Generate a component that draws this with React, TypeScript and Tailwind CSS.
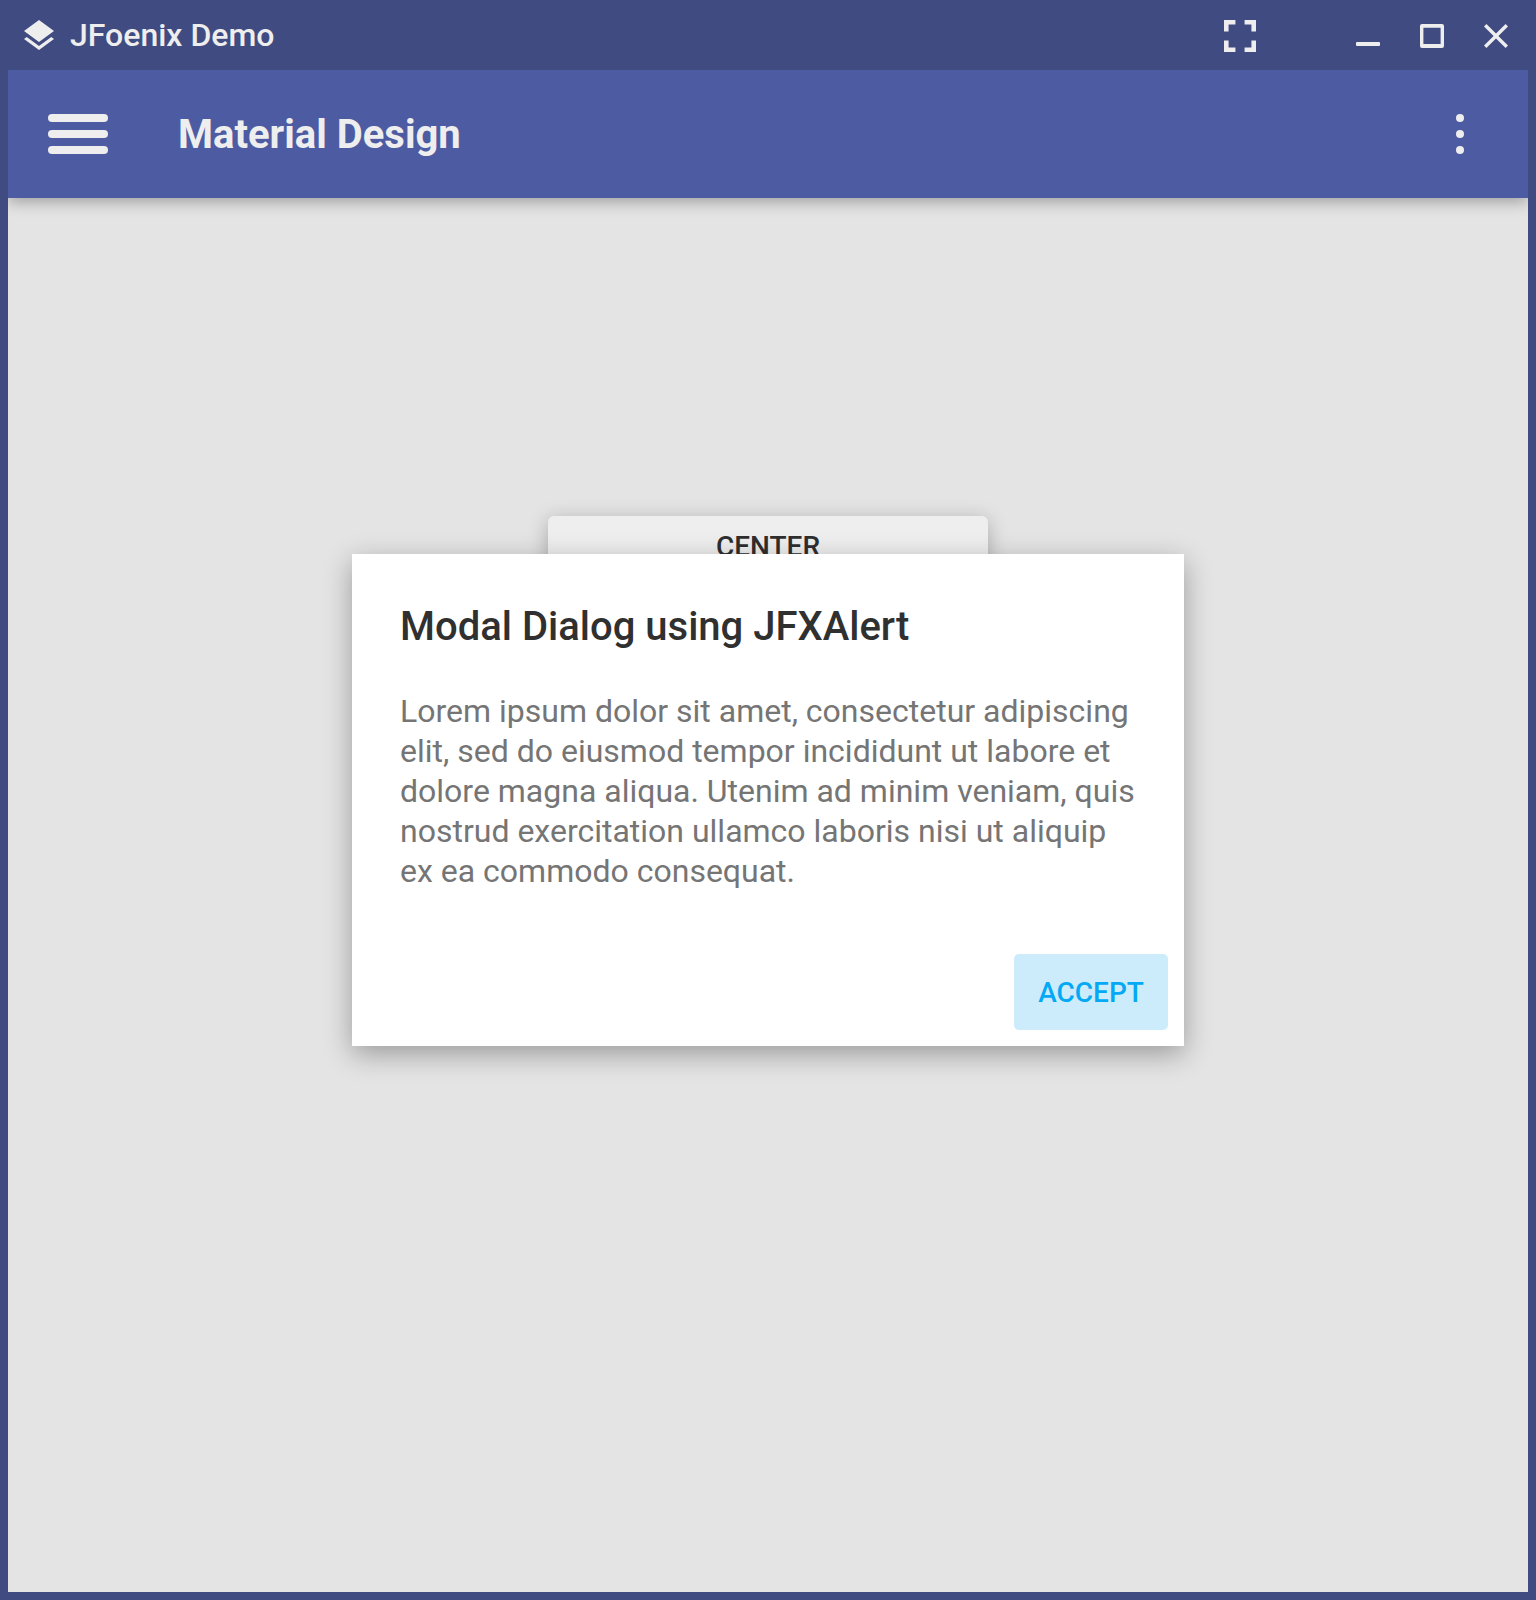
import React from "react";

function TitleBar() {
  return (
    <header className="flex h-[70px] shrink-0 items-center pl-6 pr-7 text-[#eeeeee]">
      <svg className="h-[30px] w-[30px]" viewBox="3 2 18 19.07" preserveAspectRatio="none" fill="currentColor">
        <path d="M11.99 18.54l-7.37-5.73L3 14.07l9 7 9-7-1.63-1.27-7.38 5.74zM12 16l7.36-5.73L21 9l-9-7-9 7 1.63 1.27L12 16z" />
      </svg>
      <span className="ml-4 text-[32px] leading-[38px] font-medium">JFoenix Demo</span>
      <div className="ml-auto flex items-center pt-0.5">
        <svg className="h-8 w-8" viewBox="5 5 14 14" fill="currentColor">
          <path d="M7 14H5v5h5v-2H7v-3zm-2-4h2V7h3V5H5v5zm12 7h-3v2h5v-5h-2v3zM14 5v2h3v3h2V5h-5z" />
        </svg>
        <span className="mt-4 ml-[100px] h-1 w-6 rounded-[1px] bg-[#eeeeee]" />
        <svg className="ml-10 h-6 w-6" viewBox="0 0 24 24" fill="currentColor" fillRule="evenodd">
          <path d="M2 0h20a2 2 0 0 1 2 2v20a2 2 0 0 1-2 2H2a2 2 0 0 1-2-2V2a2 2 0 0 1 2-2zM3.4 3.8v16.2h17.2V3.8z" />
        </svg>
        <svg className="ml-10 h-6 w-6" viewBox="5 5 14 14" fill="currentColor">
          <path d="M19 6.41L17.59 5 12 10.59 6.41 5 5 6.41 10.59 12 5 17.59 6.41 19 12 13.41 17.59 19 19 17.59 13.41 12z" />
        </svg>
      </div>
    </header>
  );
}

function Toolbar() {
  return (
    <div className="relative z-10 flex h-32 shrink-0 items-center bg-[#4d5ca2] pl-10 pr-16 text-[#eeeeee] shadow-[0_4px_14px_rgba(0,0,0,0.3)]">
      <button className="flex w-[60px] flex-col gap-2" aria-label="Menu">
        <span className="h-2 w-full rounded-full bg-[#eeeeee]" />
        <span className="h-2 w-full rounded-full bg-[#eeeeee]" />
        <span className="h-2 w-full rounded-full bg-[#eeeeee]" />
      </button>
      <h1 className="ml-[70px] pt-0.5 text-[40px] leading-[48px] font-bold">Material Design</h1>
      <button className="ml-auto flex flex-col gap-2" aria-label="Options">
        <span className="h-2 w-2 rounded-full bg-[#eeeeee]" />
        <span className="h-2 w-2 rounded-full bg-[#eeeeee]" />
        <span className="h-2 w-2 rounded-full bg-[#eeeeee]" />
      </button>
    </div>
  );
}

function AlertDialog() {
  return (
    <div
      role="dialog"
      className="absolute top-[356px] left-[344px] z-20 flex h-[492px] w-[832px] flex-col bg-white px-12 pt-[49px] shadow-[0_8px_26px_rgba(0,0,0,0.32)]"
    >
      <h2 className="text-[40px] leading-[48px] font-medium text-[#303030]">Modal Dialog using JFXAlert</h2>
      <p className="mt-10 text-[32px] leading-10 whitespace-nowrap text-[#757575]">
        Lorem ipsum dolor sit amet, consectetur adipiscing
        <br />
        elit, sed do eiusmod tempor incididunt ut labore et
        <br />
        dolore magna aliqua. Utenim ad minim veniam, quis
        <br />
        nostrud exercitation ullamco laboris nisi ut aliquip
        <br />
        ex ea commodo consequat.
      </p>
      <button className="-mr-8 mt-auto mb-4 h-[76px] w-[154px] self-end rounded-[5px] bg-[#cdecfb] pt-0.5 text-[28px] leading-[34px] font-medium text-[#03a9f4]">
        ACCEPT
      </button>
    </div>
  );
}

export default function App() {
  return (
    <div className="flex h-[1600px] w-[1536px] flex-col bg-[#3f4b81] font-[Roboto,sans-serif]">
      <TitleBar />
      <div className="mx-2 mb-2 flex min-h-0 flex-1 flex-col overflow-hidden">
        <Toolbar />
        <main className="relative flex flex-1 flex-col items-center bg-[#e4e4e4] pt-[318px]">
          <button className="flex h-[62px] w-[440px] items-center justify-center rounded-[6px] bg-[#eeeeee] text-[28px] leading-[34px] font-medium text-[#2e2e2e] shadow-[0_4px_20px_rgba(0,0,0,0.26)]">
            CENTER
          </button>
          <AlertDialog />
        </main>
      </div>
    </div>
  );
}
